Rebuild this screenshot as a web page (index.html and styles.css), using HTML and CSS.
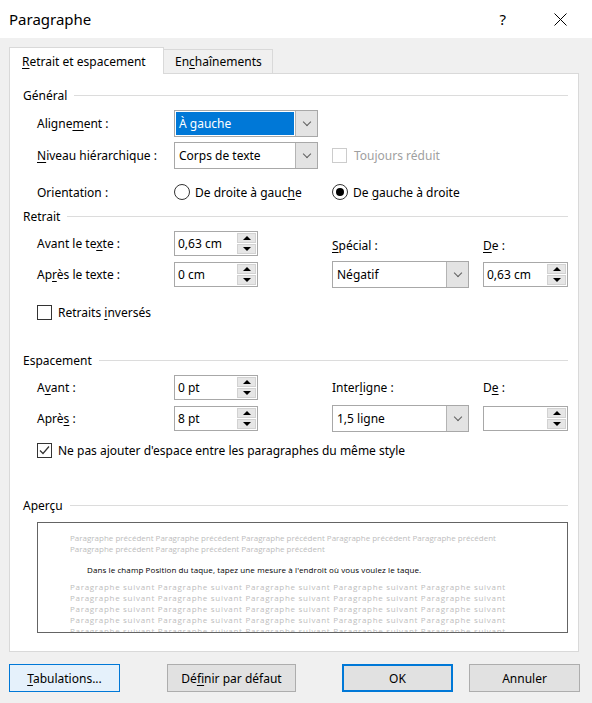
FILE: index.html
```html
<!DOCTYPE html>
<html lang="fr">
<head>
  <meta charset="UTF-8">
  <title>Paragraphe</title>
  <link rel="stylesheet" href="styles.css">
</head>
<body>
  <div class="titlebar">
    <span class="title">Paragraphe</span>
    <span class="help">?</span>
    <svg class="close" width="13" height="13" viewBox="0 0 13 13">
      <path d="M0.5 0.5 L12.5 12.5 M12.5 0.5 L0.5 12.5" stroke="#000" stroke-width="1" fill="none"/>
    </svg>
  </div>

  <div class="tabs">
    <div class="tab active"><u>R</u>etrait et espacement</div>
    <div class="tab">En<u>c</u>haînements</div>
  </div>

  <div class="panel">
    <!-- Général -->
    <div class="legend legend-general">Général</div>
    <div class="row">
      <span>Aligne<u>m</u>ent :</span>
      <div class="combo combo-short">
        <span class="combo-value selected">À gauche</span>
        <span class="combo-drop"></span>
      </div>
    </div>
    <div class="row">
      <span><u>N</u>iveau hiérarchique :</span>
      <div class="combo combo-short">
        <span class="combo-value">Corps de texte</span>
        <span class="combo-drop"></span>
      </div>
      <span class="check disabled"><span class="box"></span><span>Toujours réduit</span></span>
    </div>
    <div class="row row-option orient">
      <span>Orientation :</span>
      <span class="radio"><span class="dot"></span><span>De droite à gauc<u>h</u>e</span></span>
      <span class="radio checked"><span class="dot"></span><span>De <u>g</u>auche à droite</span></span>
    </div>

    <!-- Retrait -->
    <div class="legend legend-retrait">Retrait</div>
    <div class="row">
      <span>Avant le te<u>x</u>te :</span>
      <div class="spin">
        <span class="spin-value">0,63 cm</span>
        <span class="spin-btns"><span class="up"></span><span class="down"></span></span>
      </div>
      <span class="col-label"><u>S</u>pécial :</span>
      <span class="col-label"><u>D</u>e :</span>
    </div>
    <div class="row">
      <span>Ap<u>r</u>ès le texte :</span>
      <div class="spin">
        <span class="spin-value">0 cm</span>
        <span class="spin-btns"><span class="up"></span><span class="down"></span></span>
      </div>
      <div class="combo combo-wide">
        <span class="combo-value">Négatif</span>
        <span class="combo-drop"></span>
      </div>
      <div class="spin spin-wide">
        <span class="spin-value">0,63 cm</span>
        <span class="spin-btns"><span class="up"></span><span class="down"></span></span>
      </div>
    </div>
    <div class="row row-option retrait-check">
      <span class="check full"><span class="box"></span><span>Retraits <u>i</u>nversés</span></span>
    </div>

    <!-- Espacement -->
    <div class="legend legend-espace">Espacement</div>
    <div class="row">
      <span>A<u>v</u>ant :</span>
      <div class="spin">
        <span class="spin-value">0 pt</span>
        <span class="spin-btns"><span class="up"></span><span class="down"></span></span>
      </div>
      <span>Inter<u>l</u>igne :</span>
      <span>D<u>e</u> :</span>
    </div>
    <div class="row">
      <span>Aprè<u>s</u> :</span>
      <div class="spin">
        <span class="spin-value">8 pt</span>
        <span class="spin-btns"><span class="up"></span><span class="down"></span></span>
      </div>
      <div class="combo combo-wide">
        <span class="combo-value">1,5 ligne</span>
        <span class="combo-drop"></span>
      </div>
      <div class="spin spin-wide">
        <span class="spin-value"></span>
        <span class="spin-btns"><span class="up"></span><span class="down"></span></span>
      </div>
    </div>
    <div class="row row-option espace-check">
      <span class="check checked full">
        <span class="box">
          <svg width="13" height="13" viewBox="0 0 13 13"><path d="M2 6.5 L5 9.5 L11 2.5" stroke="#333" stroke-width="1.2" fill="none"/></svg>
        </span>
        <span>Ne pas ajouter d'espace entre les paragraphes du même style</span>
      </span>
    </div>

    <!-- Aperçu -->
    <div class="legend legend-apercu">Aperçu</div>
    <div class="preview-wrap">
      <div class="preview">
        <div class="para ghost">
          <div>Paragraphe précédent Paragraphe précédent Paragraphe précédent Paragraphe précédent Paragraphe précédent</div>
          <div>Paragraphe précédent Paragraphe précédent Paragraphe précédent</div>
        </div>
        <div class="para current">Dans le champ Position du taque, tapez une mesure à l'endroit où vous voulez le taque.</div>
        <div class="para ghost next">
          <div>Paragraphe suivant Paragraphe suivant Paragraphe suivant Paragraphe suivant Paragraphe suivant</div>
          <div>Paragraphe suivant Paragraphe suivant Paragraphe suivant Paragraphe suivant Paragraphe suivant</div>
          <div>Paragraphe suivant Paragraphe suivant Paragraphe suivant Paragraphe suivant Paragraphe suivant</div>
          <div>Paragraphe suivant Paragraphe suivant Paragraphe suivant Paragraphe suivant Paragraphe suivant</div>
          <div>Paragraphe suivant Paragraphe suivant Paragraphe suivant Paragraphe suivant Paragraphe suivant</div>
        </div>
      </div>
    </div>
  </div>

  <div class="actions">
    <div class="group group-left">
      <button class="btn hover"><u>T</u>abulations...</button>
      <button class="btn btn-default">Dé<u>f</u>inir par défaut</button>
    </div>
    <div class="group group-right">
      <button class="btn primary">OK</button>
      <button class="btn">Annuler</button>
    </div>
  </div>
</body>
</html>
```

FILE: styles.css
```css
* {
  box-sizing: border-box;
}

body {
  margin: 0;
  width: 592px;
  height: 703px;
  overflow: hidden;
  background-color: #f0f0f0;
  font-family: "Noto Sans", "Open Sans", sans-serif;
  font-size: 12px;
  color: #000;
}

u {
  text-underline-offset: 2px;
}

/* Title bar */
.titlebar {
  height: 38px;
  background-color: #fff;
  display: flex;
  align-items: center;
  padding-left: 9px;
}

.title {
  flex: 1;
  font-size: 15px;
}

.help {
  font-size: 15px;
  margin-right: 48px;
}

.close {
  margin-right: 25px;
}

/* Tabs */
.tabs {
  display: flex;
  align-items: flex-end;
  height: 26px;
  margin-top: 9px;
  padding-left: 9px;
}

.tab {
  height: 24px;
  display: flex;
  align-items: center;
  padding-left: 11px;
  width: 109px;
  border: 1px solid #d9d9d9;
  border-left: none;
  border-bottom: none;
}

.tab.active {
  position: relative;
  z-index: 1;
  height: 27px;
  width: 155px;
  margin-bottom: -1px;
  padding-left: 12px;
  background-color: #fff;
  border-left: 1px solid #d9d9d9;
}

/* Panel */
.panel {
  margin-left: 9px;
  width: 570px;
  height: 579px;
  background-color: #fff;
  border: 1px solid #d9d9d9;
  padding: 11px 10px 0 13px;
}

.legend {
  height: 20px;
  display: flex;
  align-items: center;
  margin-bottom: 1px;
}

.legend::after {
  content: "";
  flex: 1;
  height: 1px;
  margin-left: 7px;
  background-color: #dcdcdc;
}

.legend-general {
  margin-bottom: 3px;
}

.legend-retrait {
  margin-top: 4px;
  margin-bottom: 0;
}

.legend-espace {
  margin-top: 28px;
}

.legend-apercu {
  margin-top: 35px;
}

.row {
  display: grid;
  grid-template-columns: 137px 158px 151px 85px;
  align-items: center;
  justify-items: start;
  padding-left: 14px;
  margin-top: 5px;
}

.row-option {
  height: 20px;
}

.orient {
  margin-top: 13px;
}

.retrait-check {
  margin-top: 14px;
}

.espace-check {
  margin-top: 8px;
}

.col-label {
  margin-top: 3px;
}

/* Combo boxes */
.combo {
  display: flex;
  height: 27px;
  border: 1px solid #a8a8a8;
  background-color: #fff;
}

.combo-short {
  width: 144px;
}

.combo-wide {
  width: 137px;
}

.combo-value {
  flex: 1;
  display: flex;
  align-items: center;
  margin: 1px;
  padding-left: 3px;
}

.combo-value.selected {
  background-color: #0078d7;
  color: #fff;
}

.combo-drop {
  width: 22px;
  background-color: #e3e3e3;
  border-left: 1px solid #b4b4b4;
  display: flex;
  align-items: center;
  justify-content: center;
}

.combo-drop::after {
  content: "";
  width: 5px;
  height: 5px;
  border-right: 1px solid #5f5f5f;
  border-bottom: 1px solid #5f5f5f;
  transform: translateY(-2px) rotate(45deg);
}

/* Spin boxes */
.spin {
  display: flex;
  width: 84px;
  height: 25px;
  border: 1px solid #a8a8a8;
  background-color: #fff;
  padding: 1px 1px 1px 0;
}

.spin-wide {
  width: 85px;
}

.spin-value {
  flex: 1;
  display: flex;
  align-items: center;
  padding-left: 3px;
}

.spin-btns {
  width: 19px;
  display: flex;
  flex-direction: column;
  gap: 1px;
}

.spin-btns span {
  flex: 1;
  display: flex;
  align-items: center;
  justify-content: center;
  background-color: #e6e6e6;
  border: 1px solid #d2d2d2;
}

.spin-btns .up::after,
.spin-btns .down::after {
  content: "";
  border-left: 4px solid transparent;
  border-right: 4px solid transparent;
}

.spin-btns .up::after {
  border-bottom: 4px solid #000;
}

.spin-btns .down::after {
  border-top: 4px solid #000;
}

/* Check boxes and radio buttons */
.check,
.radio {
  display: flex;
  align-items: center;
  gap: 6px;
}

.check.full {
  grid-column: 1 / -1;
}

.box {
  width: 15px;
  height: 15px;
  border: 1px solid #333;
  background-color: #fff;
  display: flex;
  align-items: center;
  justify-content: center;
}

.check.disabled {
  color: #a0a0a0;
  gap: 7px;
}

.check.disabled .box {
  border-color: #cccccc;
}

.dot {
  width: 16px;
  height: 16px;
  border: 1px solid #333;
  border-radius: 50%;
  display: flex;
  align-items: center;
  justify-content: center;
}

.radio {
  gap: 5px;
}

.radio.checked .dot::after {
  content: "";
  width: 8px;
  height: 8px;
  border-radius: 50%;
  background-color: #000;
}

/* Preview */
.preview-wrap {
  padding-left: 14px;
  margin-top: 7px;
}

.preview {
  height: 111px;
  border: 1px solid #646464;
  overflow: hidden;
  padding: 9px 0 0 32px;
  font-family: "Open Sans", sans-serif;
  font-size: 8px;
  line-height: 11px;
  white-space: nowrap;
}

.para.ghost {
  color: #bdbdbd;
}

.para.next {
  letter-spacing: 0.7px;
}

.para.current {
  margin: 10px 0 6px 17px;
  color: #000;
  letter-spacing: 0.1px;
}

/* Bottom buttons */
.actions {
  display: flex;
  justify-content: space-between;
  margin-top: 12px;
  padding: 0 12px 0 9px;
}

.group {
  display: flex;
}

.group-left {
  gap: 47px;
}

.group-right {
  gap: 16px;
}

.btn {
  width: 111px;
  height: 28px;
  font-family: inherit;
  font-size: 12px;
  color: #000;
  background-color: #e1e1e1;
  border: 1px solid #adadad;
  padding: 0;
}

.btn-default {
  width: 129px;
}

.btn.hover {
  background-color: #e5f1fb;
  border-color: #0078d7;
}

.btn.primary {
  border: 2px solid #0078d7;
}
```
